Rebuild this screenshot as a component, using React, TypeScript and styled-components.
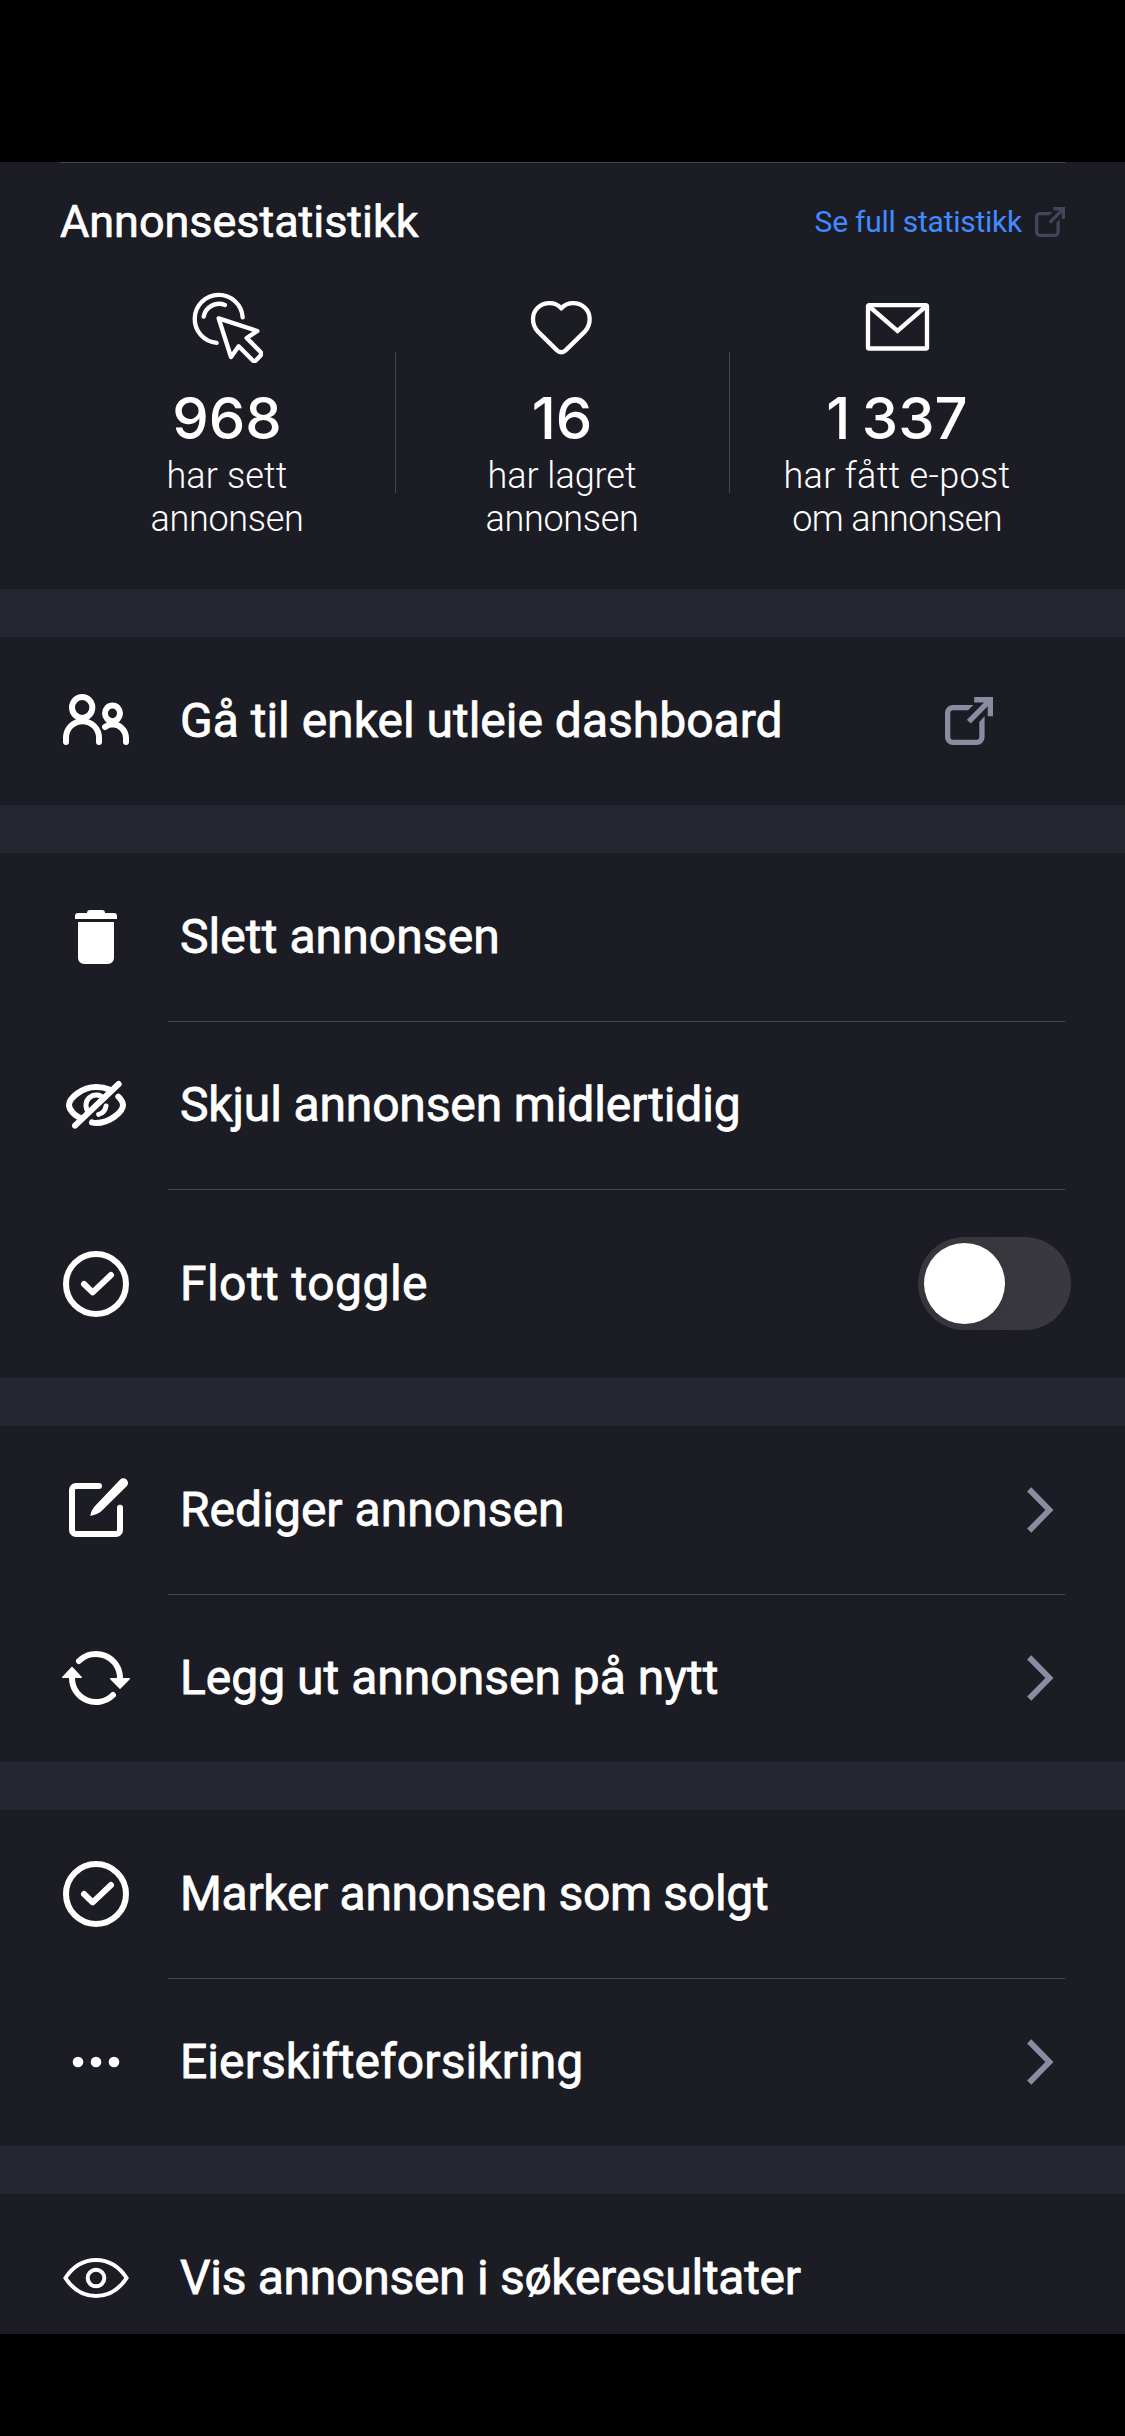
import React from "react";
import styled, { createGlobalStyle } from "styled-components";

const colors = {
  surface: "#1c1c24",
  band: "#262630",
  line: "#44445a",
  muted: "#8b8ca2",
  link: "#3f8bff",
};

const GlobalStyle = createGlobalStyle`
  * { box-sizing: border-box; }
  body { margin: 0; background: #000; }
`;

const Screen = styled.main`
  display: flex;
  flex-direction: column;
  width: 1125px;
  height: 2436px;
  padding: 162px 0 102px;
  overflow: hidden;
  background: #000;
  color: #fff;
  font-family: Roboto, "Liberation Sans", sans-serif;
  font-weight: 400;
`;

const Content = styled.div`
  flex: 1;
  min-height: 0;
  display: flex;
  flex-direction: column;
  gap: 48px;
  overflow: hidden;
  background: ${colors.band};
`;

const Section = styled.section`
  flex: none;
  background: ${colors.surface};
`;

const StatsSection = styled(Section)`
  height: 427px;
  padding: 0 60px;
`;

const StatsHeader = styled.header`
  display: flex;
  justify-content: space-between;
  align-items: center;
  height: 119px;
  border-top: 1px solid ${colors.line};
`;

const Title = styled.h1`
  margin: 0;
  font-size: 45px;
  line-height: 54px;
  font-weight: 400;
  letter-spacing: -0.05px;
  -webkit-text-stroke: 0.7px currentColor;
`;

const StatsLink = styled.a`
  display: flex;
  align-items: center;
  gap: 13px;
  color: ${colors.link};
  font-size: 30px;
  line-height: 36px;
  letter-spacing: -0.25px;
`;

const StatsGrid = styled.div`
  display: grid;
  grid-template-columns: 336px 334px 335px;
  padding-top: 10px;
`;

const Stat = styled.div`
  display: flex;
  flex-direction: column;
  align-items: center;
  height: 270px;
  padding-right: 2px;
  background: linear-gradient(${colors.line}, ${colors.line}) no-repeat right 61px / 1px 141px;

  &:last-child {
    padding-right: 1px;
    background: none;
  }
`;

const StatIcon = styled.svg`
  display: block;
  width: 72px;
  height: 72px;
`;

const StatValue = styled.strong`
  margin: 20px 0 2px;
  font-family: Inter, Roboto, sans-serif;
  font-size: 58px;
  line-height: 70px;
  font-weight: 500;
  word-spacing: -4px;
`;

const StatLabel = styled.span<{ $spacing: number }>`
  font-size: 36px;
  line-height: 43px;
  font-weight: 300;
  letter-spacing: ${(p) => p.$spacing}px;
`;

const Row = styled.div<{ $tall?: boolean }>`
  display: flex;
  align-items: center;
  height: ${(p) => (p.$tall ? 189 : 168)}px;
  padding: 0 60px;

  & + & {
    background: linear-gradient(${colors.line}, ${colors.line}) no-repeat 168px 0 / 897px 1px;
  }
`;

const RowIcon = styled.svg`
  flex: none;
  width: 72px;
  height: 72px;
  margin-right: 48px;
`;

const RowLabel = styled.span<{ $spacing: number }>`
  flex: 1;
  font-size: 48px;
  line-height: 56px;
  letter-spacing: ${(p) => p.$spacing}px;
  white-space: nowrap;
  -webkit-text-stroke: 0.8px currentColor;
`;

const ExternalGlyph = styled.svg<{ $size: number; $inset?: number }>`
  flex: none;
  width: ${(p) => p.$size}px;
  height: ${(p) => p.$size}px;
  margin-right: ${(p) => p.$inset ?? 0}px;
`;

const ChevronGlyph = styled.svg`
  flex: none;
  width: 30px;
  height: 48px;
  margin-right: 10px;
`;

const Switch = styled.button`
  flex: none;
  display: flex;
  align-items: center;
  width: 153px;
  height: 93px;
  margin-right: -6px;
  padding: 0 6px;
  border: 0;
  border-radius: 47px;
  background: #39383f;
`;

const Knob = styled.span`
  width: 81px;
  height: 81px;
  border-radius: 50%;
  background: #fff;
  box-shadow: 0 6px 18px rgba(0, 0, 0, 0.1);
`;

type StrokeProps = { w?: number; children: React.ReactNode };
const Strokes = ({ w = 18, children }: StrokeProps) => (
  <g fill="none" stroke="#fff" strokeWidth={w} strokeLinecap="round" strokeLinejoin="round">
    {children}
  </g>
);

const External = ({ size, color, inset }: { size: number; color: string; inset?: number }) => (
  <ExternalGlyph $size={size} $inset={inset} viewBox="0 0 48 48" fill={color}>
    <path d="M28.5 8H8a8 8 0 0 0-8 8v24a8 8 0 0 0 8 8h23.6a8 8 0 0 0 8-8V19.3L34.3 25v15a2.7 2.7 0 0 1-2.7 2.7H8A2.7 2.7 0 0 1 5.3 40V16A2.7 2.7 0 0 1 8 13.3h15z" />
    <path d="M29.2 0H48v19.3h-5.3V9.2L25.7 26.6 21.9 22.8 39 5.4h-9.8z" />
  </ExternalGlyph>
);

const Chevron = () => (
  <ChevronGlyph viewBox="0 0 30 48" fill="none" stroke={colors.muted} strokeWidth="5.8">
    <path d="M4.200 3.400 24.400 24 4.200 44.600" strokeLinejoin="miter" />
  </ChevronGlyph>
);

const icons: Record<string, React.ReactNode> = {
  click: (
    <Strokes w={13}>
      <path d="M77 155.500A72 72 0 1 1 155 79" />
      <path d="M38 77A47 47 0 0 1 102 42" />
      <path d="M83 82 199 120 167 141 208 182Q214 188 208 194L196 207Q190 213 184 207L143 166 120 198Z" />
    </Strokes>
  ),
  heart: (
    <Strokes w={13}>
      <path d="M106 52C116 41 127 36.500 141 36.500C170 36.500 191 57 191 84C191 99 186 111 177 121L118 179Q106 189 94 179L35 121C26 111 21 99 21 84C21 57 42 36.500 71 36.500C85 36.500 96 41 106 52Z" />
    </Strokes>
  ),
  mail: (
    <Strokes w={13}>
      <rect x="21" y="42.500" width="177" height="130" rx="4" />
      <path d="M23 45 109.500 120 196 45" strokeLinejoin="miter" />
    </Strokes>
  ),
  people: (
    <Strokes>
      <ellipse cx="66.500" cy="67.500" rx="30.500" ry="31.500" />
      <path d="M18 171V158A49.500 49.500 0 0 1 117 158V171" />
      <ellipse cx="157.500" cy="85" rx="22.500" ry="23.500" />
      <path d="M135 126Q146 118 158 118A41 41 0 0 1 198 158V171" />
    </Strokes>
  ),
  trash: (
    <path
      fill="#fff"
      d="M45 54V45a9 9 0 0 1 9-9H81a9 9 0 0 1 9-9H126a9 9 0 0 1 9 9H162a9 9 0 0 1 9 9V54ZM54 63H162V171a18 18 0 0 1-18 18H72a18 18 0 0 1-18-18Z"
    />
  ),
  hidden: (
    <Strokes>
      <path d="M45 170 176 45" />
      <path d="M150 62C136 56 122 54 108 54C66 54 27 88 27 108C27 122 44 140 62 148" />
      <path d="M175 83C184 92 189 100 189 108C189 128 150 162 108 162C103 162 99 161 96 160" />
      <g strokeWidth="15">
        <path d="M132 88A30 30 0 0 0 86 130" />
        <path d="M138 111A30 30 0 0 1 116 136" />
      </g>
    </Strokes>
  ),
  check: (
    <Strokes>
      <circle cx="108" cy="108" r="90" />
      <path d="M72 108 98 133 153 81" />
    </Strokes>
  ),
  edit: (
    <>
      <Strokes>
        <path d="M117 36H48A12 12 0 0 0 36 48V168A12 12 0 0 0 48 180H168A12 12 0 0 0 180 168V101" />
      </Strokes>
      <path fill="#fff" d="M91 126Q93 109 105 96L180 17A14 14 0 0 1 200 37L124 112Q113 121 91 126Z" />
    </>
  ),
  refresh: (
    <>
      <Strokes>
        <path d="M57 57A72 72 0 0 1 180 108" />
        <path d="M159 159A72 72 0 0 1 36 108" />
      </Strokes>
      <path
        fill="#fff"
        stroke="#fff"
        strokeWidth="4"
        strokeLinejoin="round"
        d="M152 110H208L180 139ZM8 106H64L36 76Z"
      />
    </>
  ),
  dots: (
    <g fill="#fff">
      <circle cx="54" cy="108" r="16" />
      <circle cx="108" cy="108" r="16" />
      <circle cx="162" cy="108" r="16" />
    </g>
  ),
  eye: (
    <Strokes w={12}>
      <path d="M16 108C40 72 72 54 108 54S176 72 200 108C176 144 144 162 108 162S40 144 16 108Z" />
      <circle cx="108" cy="108" r="25" />
    </Strokes>
  ),
};

type StatData = { icon: string; value: string; lines: { text: string; spacing: number }[] };

const stats: StatData[] = [
  {
    icon: "click",
    value: "968",
    lines: [
      { text: "har sett", spacing: 0.14 },
      { text: "annonsen", spacing: -0.33 },
    ],
  },
  {
    icon: "heart",
    value: "16",
    lines: [
      { text: "har lagret", spacing: -0.04 },
      { text: "annonsen", spacing: -0.33 },
    ],
  },
  {
    icon: "mail",
    value: "1 337",
    lines: [
      { text: "har fått e-post", spacing: 0.33 },
      { text: "om annonsen", spacing: -0.61 },
    ],
  },
];

type RowData = { icon: string; label: string; spacing: number; end?: "external" | "switch" | "chevron" };

const groups: RowData[][] = [
  [{ icon: "people", label: "Gå til enkel utleie dashboard", spacing: 0, end: "external" }],
  [
    { icon: "trash", label: "Slett annonsen", spacing: 0.08 },
    { icon: "hidden", label: "Skjul annonsen midlertidig", spacing: -0.15 },
    { icon: "check", label: "Flott toggle", spacing: 0.45, end: "switch" },
  ],
  [
    { icon: "edit", label: "Rediger annonsen", spacing: 0.03, end: "chevron" },
    { icon: "refresh", label: "Legg ut annonsen på nytt", spacing: 0, end: "chevron" },
  ],
  [
    { icon: "check", label: "Marker annonsen som solgt", spacing: -0.31 },
    { icon: "dots", label: "Eierskifteforsikring", spacing: 0.08, end: "chevron" },
  ],
  [{ icon: "eye", label: "Vis annonsen i søkeresultater", spacing: -0.28 }],
];

export default function App() {
  return (
    <Screen>
      <GlobalStyle />
      <Content>
        <StatsSection>
          <StatsHeader>
            <Title>Annonsestatistikk</Title>
            <StatsLink>
              <span>Se full statistikk</span>
              <External size={30} color={colors.line} />
            </StatsLink>
          </StatsHeader>
          <StatsGrid>
            {stats.map((s) => (
              <Stat key={s.value}>
                <StatIcon viewBox="0 0 216 216">{icons[s.icon]}</StatIcon>
                <StatValue>{s.value}</StatValue>
                {s.lines.map((line) => (
                  <StatLabel key={line.text} $spacing={line.spacing}>
                    {line.text}
                  </StatLabel>
                ))}
              </Stat>
            ))}
          </StatsGrid>
        </StatsSection>
        {groups.map((rows) => (
          <Section key={rows[0].label}>
            {rows.map((r) => (
              <Row key={r.label} $tall={r.end === "switch"}>
                <RowIcon viewBox="0 0 216 216">{icons[r.icon]}</RowIcon>
                <RowLabel $spacing={r.spacing}>{r.label}</RowLabel>
                {r.end === "external" && <External size={48} color={colors.muted} inset={72} />}
                {r.end === "chevron" && <Chevron />}
                {r.end === "switch" && (
                  <Switch role="switch" aria-checked={false}>
                    <Knob />
                  </Switch>
                )}
              </Row>
            ))}
          </Section>
        ))}
      </Content>
    </Screen>
  );
}
